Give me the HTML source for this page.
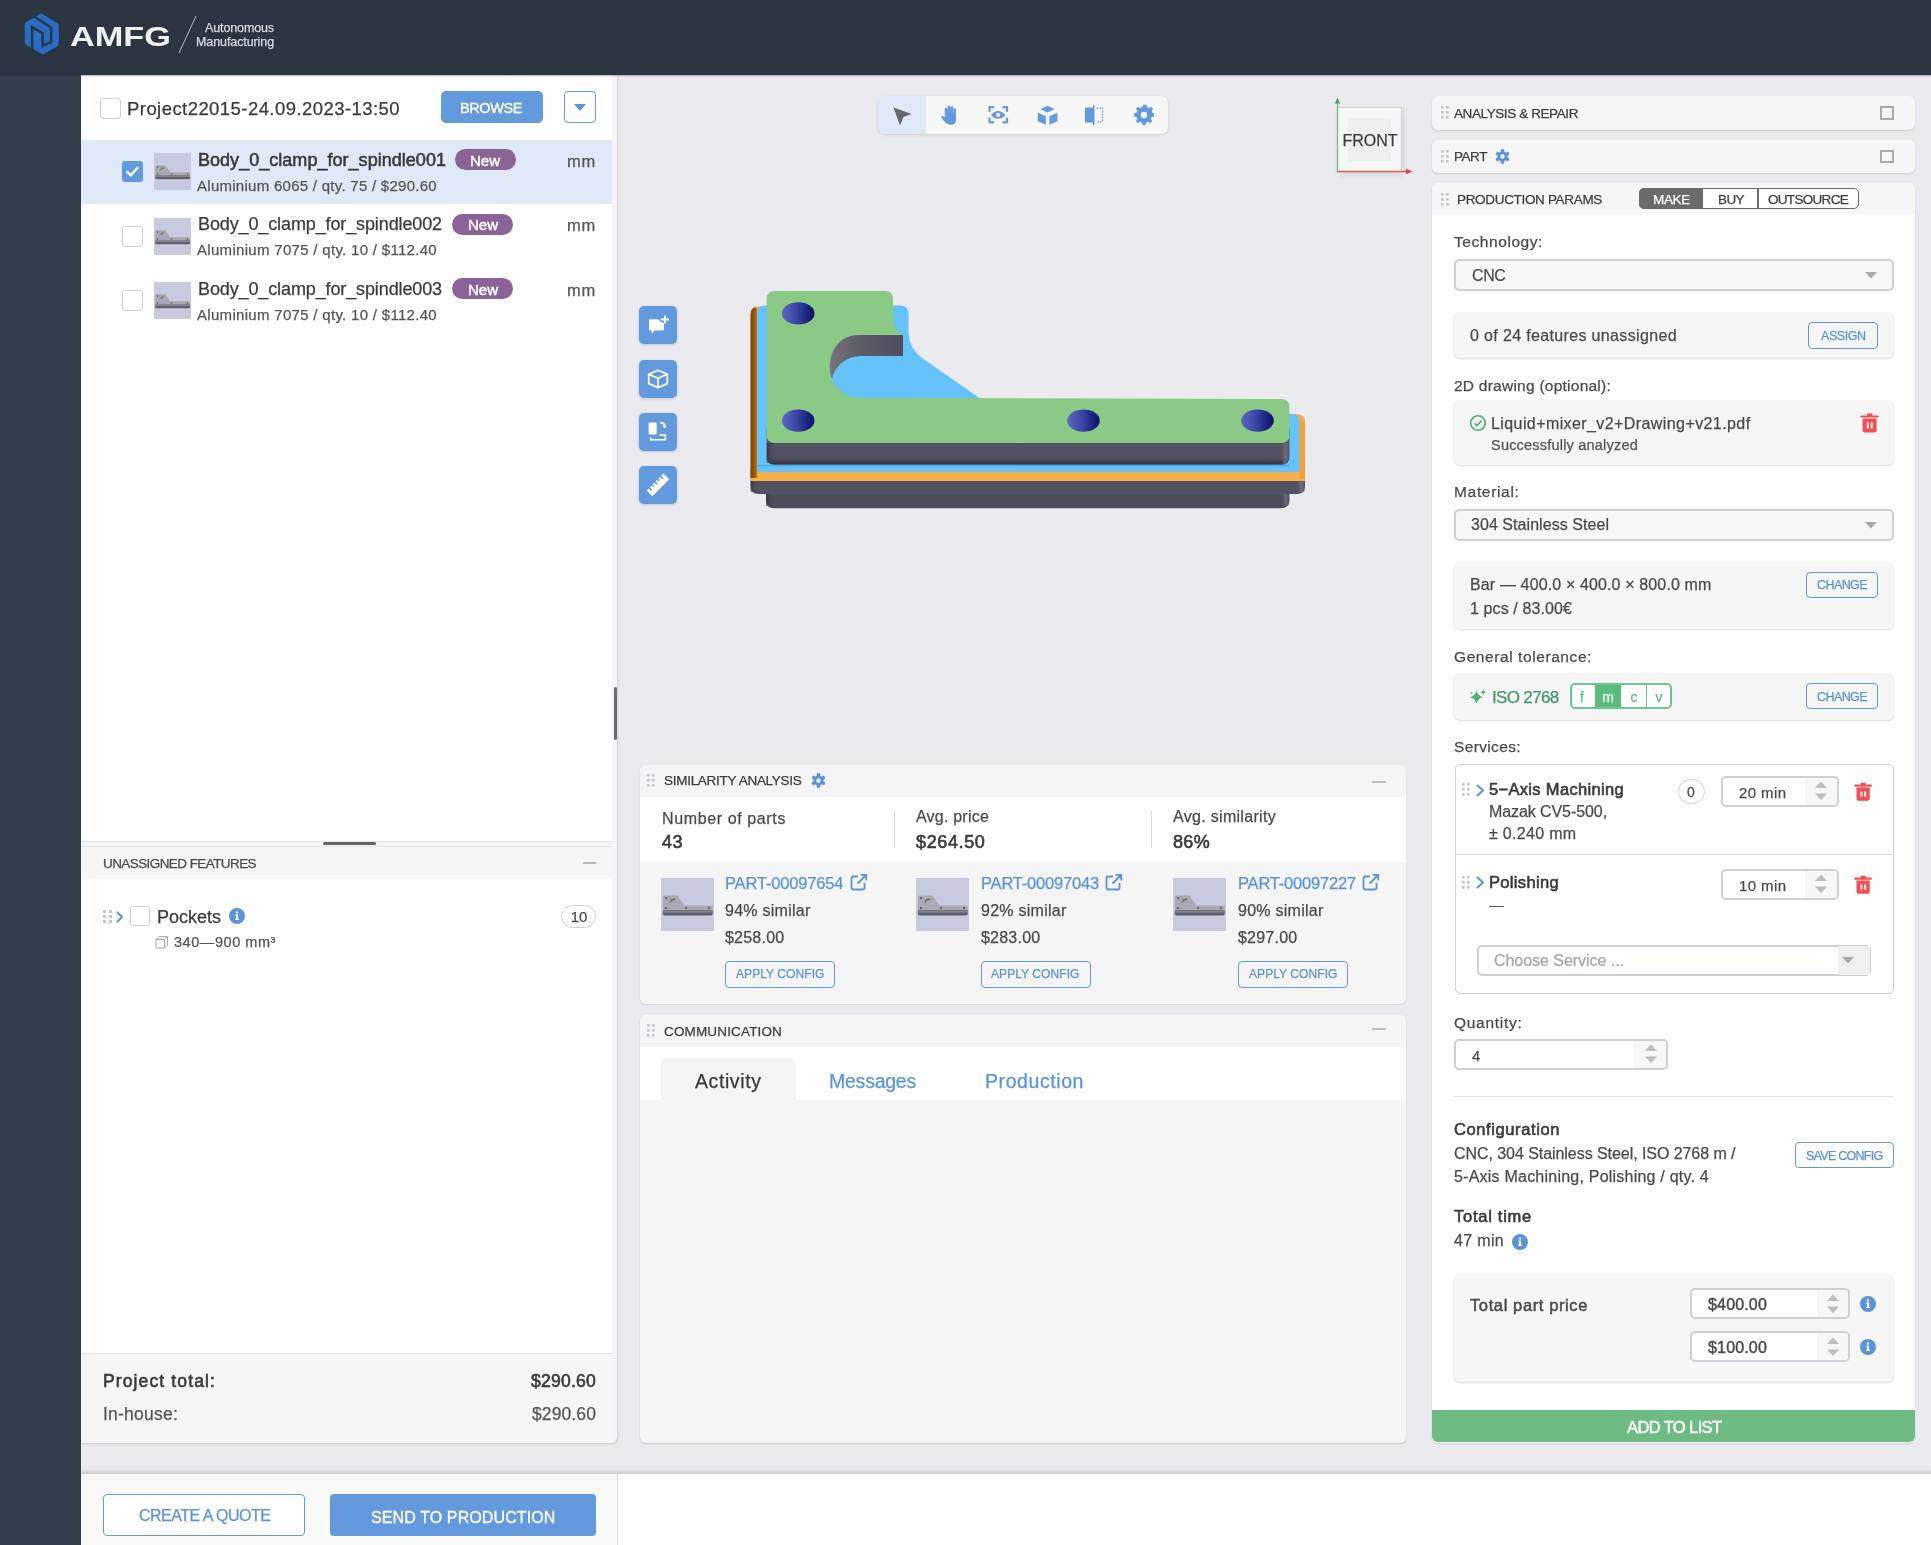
<!DOCTYPE html><html><head><meta charset="utf-8"><style>html,body{margin:0;padding:0;width:1931px;height:1545px;overflow:hidden;background:#fff;}body{position:relative;font-family:"Liberation Sans", sans-serif;}.t{position:absolute;white-space:nowrap;line-height:1;will-change:transform;-webkit-text-stroke:0.25px currentColor;}.t[style*="font-weight"]{-webkit-text-stroke:0;}</style></head><body>
<div style="position:absolute;left:0px;top:0px;width:1931px;height:75px;background:#2b3441;"></div>
<div style="position:absolute;left:0px;top:75px;width:1931px;height:2px;background:linear-gradient(to bottom, rgba(20,25,32,0.35), rgba(20,25,32,0));z-index:5;"></div>
<div style="position:absolute;left:0px;top:75px;width:81px;height:1470px;background:#343f4d;"></div>
<div style="position:absolute;left:81px;top:75px;width:1850px;height:1398px;background:#ebeaef;"></div>
<div style="position:absolute;left:81px;top:1469px;width:1850px;height:5px;background:linear-gradient(to bottom, rgba(200,200,206,0) 0%, rgba(200,200,206,0.6) 60%, #cfcfd4 100%);"></div>
<div style="position:absolute;left:81px;top:1474px;width:1850px;height:71px;background:#ffffff;"></div>
<div style="position:absolute;left:81px;top:1474px;width:537px;height:71px;background:#f9f9f8;border-right:1px solid #dcdcdc;box-sizing:border-box;"></div>
<svg style="position:absolute;left:20px;top:10px" width="44" height="50" viewBox="0 0 44 50">
<path d="M21 3.8 L38.2 14.4 L38.2 35.3 L23 44.1 L5.2 33.7 L5.2 13.3 Z" fill="#2a6cc4" stroke="#2a6cc4" stroke-width="1" stroke-linejoin="round"/>
<path d="M14 6.6 L31.1 17.6 L31.1 32.2 L22.6 35.8 L22.6 23.3 L12.1 17.2 L12.1 39" fill="none" stroke="#2b3441" stroke-width="2.4" stroke-linejoin="miter"/>
</svg>
<svg style="position:absolute;left:176px;top:14px" width="24" height="42"><line x1="3" y1="39" x2="20" y2="2" stroke="#b9bdc4" stroke-width="1"/></svg>
<div style="position:absolute;left:81px;top:75px;width:537px;height:1368px;background:#f5f5f5;border-right:1px solid #d8d8dc;box-sizing:border-box;border-bottom-right-radius:6px;box-shadow:0 1px 2px rgba(0,0,0,0.12);"></div>
<div style="position:absolute;left:81px;top:75px;width:531px;height:1278px;background:#ffffff;"></div>
<div style="position:absolute;left:614px;top:687px;width:3px;height:53px;background:#6b6b6b;border-radius:2px;"></div>
<div style="position:absolute;left:81px;top:1353px;width:531px;height:90px;background:#f6f6f6;border-top:1px solid #e4e4e4;box-sizing:border-box;"></div>
<div style="position:absolute;left:100px;top:98px;width:21px;height:21px;background:#fff;border:1.5px solid #cfd0d6;border-radius:3px;box-sizing:border-box;"></div>
<div style="position:absolute;left:441px;top:91px;width:102px;height:32px;background:#6399dd;border-radius:5px;"></div>
<div style="position:absolute;left:564px;top:91px;width:32px;height:32px;border:1.5px solid #6399dd;border-radius:4px;box-sizing:border-box;background:#fff;"></div>
<svg style="position:absolute;left:564px;top:91px" width="32" height="32"><path d="M10 13 L22 13 L16 20 Z" fill="#5b93da"/></svg>
<div style="position:absolute;left:81px;top:140px;width:531px;height:64px;background:#dfe9f7;"></div>
<div style="position:absolute;left:122px;top:161px;width:21px;height:21px;background:#6399dd;border-radius:3px;"></div>
<svg style="position:absolute;left:122px;top:161px" width="21" height="21" viewBox="0 0 21 21"><path d="M5.2 10.8 L8.8 14.3 L15.6 6.8" fill="none" stroke="#fff" stroke-width="2.4" stroke-linecap="round" stroke-linejoin="round"/></svg>
<svg style="position:absolute;left:154px;top:153px" width="37" height="37" viewBox="0 0 37 37"><rect width="37" height="37" fill="#c8cadf"/>
<path d="M1.3 13.5 Q1.3 12.2 2.6 12.2 L10.5 12.2 Q11.5 12.2 12 13 L16.3 19.2 L35 19.2 Q36.1 19.2 36.1 20.3 L36.1 23 L1.3 23 Z" fill="#a9a9b1"/>
<path d="M1.3 22.5 L36.1 22.5 L36.1 25 Q36.1 26.2 35 26.2 L2.4 26.2 Q1.3 26.2 1.3 25 Z" fill="#5f5e6e"/>
<rect x="1.3" y="23.3" width="34.8" height="0.7" fill="#9a9aa3"/>
<circle cx="3.5" cy="14" r="0.75" fill="#555"/><circle cx="3.5" cy="21" r="0.75" fill="#555"/><circle cx="17.5" cy="21" r="0.75" fill="#555"/><circle cx="33.5" cy="21" r="0.75" fill="#555"/>
<path d="M6.3 17.2 Q7 14.6 10 14.9" stroke="#66666e" stroke-width="1" fill="none"/></svg>
<div style="position:absolute;left:454.5px;top:149px;width:61px;height:21px;background:#8a6496;border-radius:11px;"></div>
<div style="position:absolute;left:122px;top:225.5px;width:21px;height:21px;background:#fff;border:1.5px solid #cfd0d6;border-radius:3px;box-sizing:border-box;"></div>
<svg style="position:absolute;left:154px;top:217.5px" width="37" height="37" viewBox="0 0 37 37"><rect width="37" height="37" fill="#c8cadf"/>
<path d="M1.3 13.5 Q1.3 12.2 2.6 12.2 L10.5 12.2 Q11.5 12.2 12 13 L16.3 19.2 L35 19.2 Q36.1 19.2 36.1 20.3 L36.1 23 L1.3 23 Z" fill="#a9a9b1"/>
<path d="M1.3 22.5 L36.1 22.5 L36.1 25 Q36.1 26.2 35 26.2 L2.4 26.2 Q1.3 26.2 1.3 25 Z" fill="#5f5e6e"/>
<rect x="1.3" y="23.3" width="34.8" height="0.7" fill="#9a9aa3"/>
<circle cx="3.5" cy="14" r="0.75" fill="#555"/><circle cx="3.5" cy="21" r="0.75" fill="#555"/><circle cx="17.5" cy="21" r="0.75" fill="#555"/><circle cx="33.5" cy="21" r="0.75" fill="#555"/>
<path d="M6.3 17.2 Q7 14.6 10 14.9" stroke="#66666e" stroke-width="1" fill="none"/></svg>
<div style="position:absolute;left:452px;top:213.5px;width:61px;height:21px;background:#8a6496;border-radius:11px;"></div>
<div style="position:absolute;left:122px;top:290px;width:21px;height:21px;background:#fff;border:1.5px solid #cfd0d6;border-radius:3px;box-sizing:border-box;"></div>
<svg style="position:absolute;left:154px;top:282px" width="37" height="37" viewBox="0 0 37 37"><rect width="37" height="37" fill="#c8cadf"/>
<path d="M1.3 13.5 Q1.3 12.2 2.6 12.2 L10.5 12.2 Q11.5 12.2 12 13 L16.3 19.2 L35 19.2 Q36.1 19.2 36.1 20.3 L36.1 23 L1.3 23 Z" fill="#a9a9b1"/>
<path d="M1.3 22.5 L36.1 22.5 L36.1 25 Q36.1 26.2 35 26.2 L2.4 26.2 Q1.3 26.2 1.3 25 Z" fill="#5f5e6e"/>
<rect x="1.3" y="23.3" width="34.8" height="0.7" fill="#9a9aa3"/>
<circle cx="3.5" cy="14" r="0.75" fill="#555"/><circle cx="3.5" cy="21" r="0.75" fill="#555"/><circle cx="17.5" cy="21" r="0.75" fill="#555"/><circle cx="33.5" cy="21" r="0.75" fill="#555"/>
<path d="M6.3 17.2 Q7 14.6 10 14.9" stroke="#66666e" stroke-width="1" fill="none"/></svg>
<div style="position:absolute;left:452px;top:278px;width:61px;height:21px;background:#8a6496;border-radius:11px;"></div>
<div style="position:absolute;left:81px;top:840.5px;width:531px;height:6px;background:#f4f5f6;border-top:1px solid #e3e5e8;border-bottom:1px solid #e0e2e5;box-sizing:border-box;"></div>
<div style="position:absolute;left:81px;top:846.5px;width:531px;height:32px;background:#f6f6f6;"></div>
<div style="position:absolute;left:323px;top:842.4px;width:53px;height:3px;background:#666;border-radius:1.5px;"></div>
<div style="position:absolute;left:583px;top:862px;width:13px;height:1.5px;background:#bbb;"></div>
<svg style="position:absolute;left:102.5px;top:910px" width="10.0" height="14.0"><rect x="0.0" y="0.0" width="3.0" height="3.0" fill="#c5c8d2"/><rect x="0.0" y="5.0" width="3.0" height="3.0" fill="#c5c8d2"/><rect x="0.0" y="10.0" width="3.0" height="3.0" fill="#c5c8d2"/><rect x="6.0" y="0.0" width="3.0" height="3.0" fill="#c5c8d2"/><rect x="6.0" y="5.0" width="3.0" height="3.0" fill="#c5c8d2"/><rect x="6.0" y="10.0" width="3.0" height="3.0" fill="#c5c8d2"/></svg>
<svg style="position:absolute;left:116px;top:911px" width="8" height="12"><path d="M1.5 1.5 L6 6.0 L1.5 10.5" fill="none" stroke="#5b93da" stroke-width="2" stroke-linecap="round" stroke-linejoin="round"/></svg>
<div style="position:absolute;left:130px;top:906px;width:20px;height:20px;background:#fff;border:1.5px solid #cfd0d6;border-radius:3px;box-sizing:border-box;"></div>
<svg style="position:absolute;left:229px;top:908px" width="16" height="16" viewBox="0 0 16 16"><circle cx="8" cy="8" r="8" fill="#5b93da"/><rect x="7" y="6.8" width="2.1" height="5" fill="#fff"/><circle cx="8" cy="4.4" r="1.2" fill="#fff"/><rect x="6.2" y="6.6" width="2.5" height="1.2" fill="#fff"/><rect x="6.2" y="10.9" width="3.8" height="1.1" fill="#fff"/></svg>
<div style="position:absolute;left:561px;top:905px;width:35px;height:23px;border:1px solid #d2d2d6;border-radius:12px;box-sizing:border-box;background:#fff;"></div>
<svg style="position:absolute;left:155px;top:935px" width="14" height="14" viewBox="0 0 14 14"><path d="M1 4.5 L4 1.5 L12.5 1.5 L12.5 10 L9.5 13 L1 13 Z M1 4.5 L9.5 4.5 L12.5 1.5 M9.5 4.5 L9.5 13" fill="none" stroke="#aaa" stroke-width="1"/></svg>
<div style="position:absolute;left:103px;top:1494px;width:202px;height:42px;border:1.5px solid #6399dd;border-radius:4px;box-sizing:border-box;background:#fff;"></div>
<div style="position:absolute;left:330px;top:1494px;width:266px;height:42px;background:#6399dd;border-radius:4px;"></div>
<div style="position:absolute;left:878px;top:96px;width:290px;height:38px;background:#f7f7f8;border-radius:7px;box-shadow:0 1px 3px rgba(0,0,0,0.12);"></div>
<div style="position:absolute;left:878px;top:96px;width:48px;height:38px;background:#dfe9f7;border-radius:7px 0 0 7px;"></div>
<svg style="position:absolute;left:878px;top:96px" width="290" height="38" viewBox="0 0 290 38">
<path d="M15.5 11.5 L33.5 18 L25.5 21 L22 29.5 Z" fill="#666"/>
<g fill="#6399dd" transform="translate(62.5 9.5) scale(1.0)">
<path d="M5.2 17.5 Q2.6 14.6 0.9 12.3 Q0.2 11 1.5 10.5 Q2.6 10.2 4.1 11.8 L4.3 12 L4.3 3.6 Q4.3 2.3 5.6 2.3 Q6.9 2.3 6.9 3.6 L6.9 9 L7.2 1.4 Q7.2 0.1 8.5 0.1 Q9.8 0.1 9.8 1.4 L9.8 9 L10.1 2 Q10.1 0.7 11.4 0.7 Q12.7 0.7 12.7 2 L12.7 9.2 L13.1 4 Q13.1 2.7 14.3 2.7 Q15.5 2.7 15.5 4 L15.5 14.5 Q15.4 19.3 10.5 19.3 Q7.4 19.3 5.2 17.5 Z"/>
</g>
<path d="M111.5 15 L111.5 11.2 L115.3 11.2 M125.3 11.2 L129 11.2 L129 15 M129 22.5 L129 26.3 L125.3 26.3 M115.3 26.3 L111.5 26.3 L111.5 22.5" fill="none" stroke="#6399dd" stroke-width="2.2" stroke-linecap="round" stroke-linejoin="round"/>
<path d="M113 18.9 Q120.2 11.2 127.4 18.9 Q120.2 26.6 113 18.9 Z" fill="#6399dd"/>
<circle cx="120.2" cy="18.9" r="2.1" fill="#f7f7f8"/>
<path d="M169.5 9.8 L176.6 13.2 L169.5 16.6 L162.4 13.2 Z" fill="#6399dd"/>
<path d="M159.8 16.8 L167.8 20.3 L167.8 28.8 L159.8 25.2 Z" fill="#6399dd"/>
<path d="M179.4 16.8 L171.4 20.3 L171.4 28.8 L179.4 25.2 Z" fill="#6399dd"/>
<rect x="207" y="11.5" width="8" height="15" fill="#6399dd"/>
<rect x="215" y="9" width="1.5" height="20" fill="#6399dd"/>
<path d="M218.5 12.2 L224.5 12.2 L224.5 25.8 L218.5 25.8" fill="none" stroke="#6399dd" stroke-width="1.3" stroke-dasharray="1.6 1.3"/>
<g transform="translate(266 19)">
<path d="M-1.6 -9.2 L1.6 -9.2 L2.1 -6.6 L4.2 -5.7 L6.4 -7.2 L8.6 -5 L7.1 -2.8 L8 -0.7 L9.6 -0.2 L9.6 3.0 L7.1 3.6 L6.2 5.7 L7.6 7.9 L5.4 10.1 L3.2 8.6 L1.1 9.5 L0.6 12 L-2.6 12 L-3.1 9.5 L-5.2 8.6 L-7.4 10.1 L-9.6 7.9 L-8.1 5.7 L-9 3.6 L-11.5 3 L-11.5 -0.2 L-9 -0.8 L-8.1 -2.9 L-9.6 -5.1 L-7.4 -7.3 L-5.2 -5.8 L-3.1 -6.7 Z" fill="#6399dd" transform="translate(1 -1.4) scale(0.95)"/>
<circle cx="0" cy="0" r="3.2" fill="#f7f7f8"/>
</g>
</svg>
<div style="position:absolute;left:639px;top:306px;width:38px;height:38px;background:#6399dd;border-radius:5px;box-shadow:0 1px 3px rgba(0,0,0,0.15);"></div>
<div style="position:absolute;left:639px;top:360px;width:38px;height:38px;background:#6399dd;border-radius:5px;box-shadow:0 1px 3px rgba(0,0,0,0.15);"></div>
<div style="position:absolute;left:639px;top:413px;width:38px;height:38px;background:#6399dd;border-radius:5px;box-shadow:0 1px 3px rgba(0,0,0,0.15);"></div>
<div style="position:absolute;left:639px;top:466px;width:38px;height:38px;background:#6399dd;border-radius:5px;box-shadow:0 1px 3px rgba(0,0,0,0.15);"></div>
<svg style="position:absolute;left:639px;top:306px" width="38" height="38" viewBox="0 0 38 38">
<path d="M10 14.5 Q10 13.3 11.2 13.3 L19 13.3 Q20.5 13.5 21 15.5 L25 17 L25 23 Q25 24.5 23.5 24.5 L15.5 24.5 L13 28 L12.5 24.5 L11.2 24.5 Q10 24.5 10 23.3 Z" fill="#fff"/>
<path d="M26 9.5 L26 17.5 M22 13.5 L30 13.5" stroke="#fff" stroke-width="1.9"/>
</svg>
<svg style="position:absolute;left:639px;top:360px" width="38" height="38" viewBox="0 0 38 38">
<path d="M19 10.2 L28.3 14.2 L28.3 23.6 L19 27.6 L9.7 23.6 L9.7 14.2 Z M9.7 14.2 L19 18.2 L28.3 14.2 M19 18.2 L19 27.6" fill="none" stroke="#fff" stroke-width="1.7" stroke-linejoin="round"/>
</svg>
<svg style="position:absolute;left:639px;top:413px" width="38" height="38" viewBox="0 0 38 38">
<rect x="9.6" y="9.5" width="8.2" height="12" rx="1.2" fill="#fff"/>
<path d="M11.7 24.5 L11.7 26.8 L26.4 26.8 L26.4 22 L20.5 22" fill="none" stroke="#fff" stroke-width="1.6"/>
<path d="M21 9.6 Q25.5 9.6 25.6 13.3" fill="none" stroke="#fff" stroke-width="1.6"/>
<path d="M23.5 12.8 L27.8 12.8 L25.6 15.5 Z" fill="#fff"/>
</svg>
<svg style="position:absolute;left:639px;top:466px" width="38" height="38" viewBox="0 0 38 38">
<g transform="rotate(-45 19 19)">
<rect x="7" y="14.8" width="24" height="8.2" fill="#fff"/>
<rect x="10" y="14.5" width="1.7" height="3.6" fill="#6399dd"/><rect x="14" y="14.5" width="1.7" height="2.4" fill="#6399dd"/><rect x="18" y="14.5" width="1.7" height="3.6" fill="#6399dd"/><rect x="22" y="14.5" width="1.7" height="2.4" fill="#6399dd"/><rect x="26" y="14.5" width="1.7" height="3.6" fill="#6399dd"/>
</g>
</svg>
<div style="position:absolute;left:1338px;top:107px;width:64px;height:64px;background:#f6f6f7;box-shadow:1px 3px 6px rgba(0,0,0,0.12);border-top:1px solid #d4d4d8;border-right:1px solid #d4d4d8;box-sizing:border-box;"></div>
<div style="position:absolute;left:1348px;top:118px;width:43px;height:43px;background:#efeff0;"></div>
<svg style="position:absolute;left:1330px;top:92px" width="90" height="86">
<line x1="7.5" y1="9" x2="7.5" y2="79.5" stroke="#73bb8c" stroke-width="1.3"/>
<path d="M4.8 11.5 L7.5 5.5 L10.2 11.5 Z" fill="#4ea56e"/>
<line x1="7" y1="79.5" x2="78" y2="79.5" stroke="#d46060" stroke-width="1.3"/>
<path d="M76 76.7 L82.5 79.5 L76 82.3 Z" fill="#d64848"/>
</svg>
<svg style="position:absolute;left:740px;top:280px" width="580" height="240" viewBox="740 280 580 240">
<defs>
<linearGradient id="hg" x1="0" x2="1" y1="0" y2="0"><stop offset="0" stop-color="#5e68c0"/><stop offset="0.45" stop-color="#3a46a6"/><stop offset="1" stop-color="#050f63"/></linearGradient>
<linearGradient id="sideL" x1="0" x2="1"><stop offset="0" stop-color="#2c2b38"/><stop offset="0.15" stop-color="#535263"/><stop offset="1" stop-color="#535263"/></linearGradient>
<linearGradient id="sideD" x1="0" x2="0" y1="0" y2="1"><stop offset="0" stop-color="#565567"/><stop offset="0.8" stop-color="#525162"/><stop offset="1" stop-color="#343340"/></linearGradient>
<linearGradient id="endHi" x1="0" x2="1"><stop offset="0" stop-color="#535263" stop-opacity="0"/><stop offset="0.6" stop-color="#8a8a92" stop-opacity="0.55"/><stop offset="1" stop-color="#55545f" stop-opacity="0.2"/></linearGradient>
<linearGradient id="endLo" x1="0" x2="1"><stop offset="0" stop-color="#1f1e2a" stop-opacity="0.55"/><stop offset="1" stop-color="#535263" stop-opacity="0"/></linearGradient>
<linearGradient id="oside" x1="0" x2="1"><stop offset="0" stop-color="#7a4300"/><stop offset="0.6" stop-color="#9a5a08"/><stop offset="1" stop-color="#c07a20"/></linearGradient>
<linearGradient id="wall" x1="0" x2="1"><stop offset="0" stop-color="#77767e"/><stop offset="0.4" stop-color="#5d5c68"/><stop offset="1" stop-color="#4f4e5e"/></linearGradient>
</defs>
<path d="M766 478 L1289.4 478 L1289.4 500 Q1289.4 508.3 1281 508.3 L774 508.3 Q766 508.3 766 500 Z" fill="#4d4c5d"/>
<path d="M750.6 468 L1305 468 L1305 486 Q1305 494 1297 494 L758 494 Q750.6 494 750.6 486 Z" fill="#535263"/>
<path d="M758 306.4 L902 306.4 Q906 306.4 906 314 L906 333 Q906 348 919 358 L981 400.5 L1283 400.5 L1283 414 L1296 414 Q1305 414 1305 422 L1305 481 L750.6 481 L750.6 314 Q750.6 306.4 758 306.4 Z" fill="#f5ae4b"/>
<path d="M757.2 310 L757.2 478 L750.6 478 L750.6 314 Q750.6 308 756 306.8 Z" fill="url(#oside)"/>
<path d="M765 305.6 L900 305.6 Q908.5 305.6 908.5 314 L908.5 333 Q909 348 922 358 L983 400.5 L1283 400.5 L1283 414 L1292 414 Q1299.6 414 1299.6 422 L1299.6 472 L757 472 L757 313 Q757 305.6 765 305.6 Z" fill="#66c2fa"/>
<path d="M766.7 428 L1289.4 428 L1289.4 456.5 Q1289.4 464.8 1281 464.8 L775 464.8 Q766.7 464.8 766.7 456.5 Z" fill="url(#sideD)"/>
<path d="M775 290.9 L885 290.9 Q893 290.9 893 299 L893 318 Q893 330 903 335 L858 335 C841 335 829.8 349 829.8 367 C829.8 385 844 398 861 398 L1281 398.9 Q1289.4 398.9 1289.4 407 L1289.4 435 Q1289.4 443 1281 443 L775 443 Q766.7 443 766.7 435 L766.7 299 Q766.7 290.9 775 290.9 Z" fill="#8bc986"/>
<path d="M1280 443 L1289.4 443 L1289.4 456.5 Q1289.4 464.8 1281 464.8 L1280 464.8 Z" fill="url(#endHi)"/>
<rect x="766.7" y="443" width="9" height="20" fill="url(#endLo)"/>
<rect x="1296" y="481" width="9" height="11" fill="url(#endHi)"/>
<rect x="1281" y="494" width="8.4" height="12" fill="url(#endHi)"/>
<rect x="750.6" y="481" width="8" height="11" fill="url(#endLo)"/>
<rect x="766" y="494" width="8" height="12" fill="url(#endLo)"/>
<rect x="1299.6" y="421" width="5.4" height="58" fill="#f0a23a"/>
<rect x="757" y="464.8" width="532" height="1.5" fill="#3f9fe0" opacity="0.7"/>
<path d="M903 335 L858 335 C841 335 829.8 349 829.8 367 C829.8 372 830.5 376 832 379 C835 366 846 356 862 356 L903 356 Z" fill="url(#wall)"/>
<ellipse cx="798.2" cy="313.4" rx="16.3" ry="11.2" fill="url(#hg)"/>
<ellipse cx="798.2" cy="420.6" rx="16.3" ry="11.2" fill="url(#hg)"/>
<ellipse cx="1083.5" cy="420.6" rx="16.3" ry="11.2" fill="url(#hg)"/>
<ellipse cx="1257.5" cy="420.6" rx="16.3" ry="11.2" fill="url(#hg)"/>
</svg>
<div style="position:absolute;left:640px;top:765px;width:766px;height:239px;background:#f5f5f6;border-radius:6px;box-shadow:0 1px 2px rgba(0,0,0,0.08);"></div>
<div style="position:absolute;left:640px;top:797px;width:766px;height:64.5px;background:#ffffff;"></div>
<svg style="position:absolute;left:647px;top:774px" width="8.6" height="13.6"><rect x="0.0" y="0.0" width="2.6" height="2.6" fill="#c3c6d0"/><rect x="0.0" y="5.0" width="2.6" height="2.6" fill="#c3c6d0"/><rect x="0.0" y="10.0" width="2.6" height="2.6" fill="#c3c6d0"/><rect x="5.0" y="0.0" width="2.6" height="2.6" fill="#c3c6d0"/><rect x="5.0" y="5.0" width="2.6" height="2.6" fill="#c3c6d0"/><rect x="5.0" y="10.0" width="2.6" height="2.6" fill="#c3c6d0"/></svg>
<svg style="position:absolute;left:810.5px;top:773px" width="15" height="15" viewBox="-10 -10 20 20"><g fill="#5b93da"><circle r="6.6"/><rect x="-2.3" y="-9.6" width="4.6" height="5" rx="0.6" transform="rotate(0)"/><rect x="-2.3" y="-9.6" width="4.6" height="5" rx="0.6" transform="rotate(60)"/><rect x="-2.3" y="-9.6" width="4.6" height="5" rx="0.6" transform="rotate(120)"/><rect x="-2.3" y="-9.6" width="4.6" height="5" rx="0.6" transform="rotate(180)"/><rect x="-2.3" y="-9.6" width="4.6" height="5" rx="0.6" transform="rotate(240)"/><rect x="-2.3" y="-9.6" width="4.6" height="5" rx="0.6" transform="rotate(300)"/></g><circle r="2.9" fill="#f5f5f6"/></svg>
<div style="position:absolute;left:1371.5px;top:781px;width:14px;height:1.5px;background:#bdbdc2;"></div>
<div style="position:absolute;left:894px;top:811px;width:1px;height:37px;background:#dcdcdf;"></div>
<div style="position:absolute;left:1151px;top:811px;width:1px;height:37px;background:#dcdcdf;"></div>
<svg style="position:absolute;left:661px;top:878px" width="53" height="53" viewBox="0 0 37 37"><rect width="37" height="37" fill="#c8cadf"/>
<path d="M1.3 13.5 Q1.3 12.2 2.6 12.2 L10.5 12.2 Q11.5 12.2 12 13 L16.3 19.2 L35 19.2 Q36.1 19.2 36.1 20.3 L36.1 23 L1.3 23 Z" fill="#a9a9b1"/>
<path d="M1.3 22.5 L36.1 22.5 L36.1 25 Q36.1 26.2 35 26.2 L2.4 26.2 Q1.3 26.2 1.3 25 Z" fill="#5f5e6e"/>
<rect x="1.3" y="23.3" width="34.8" height="0.7" fill="#9a9aa3"/>
<circle cx="3.5" cy="14" r="0.75" fill="#555"/><circle cx="3.5" cy="21" r="0.75" fill="#555"/><circle cx="17.5" cy="21" r="0.75" fill="#555"/><circle cx="33.5" cy="21" r="0.75" fill="#555"/>
<path d="M6.3 17.2 Q7 14.6 10 14.9" stroke="#66666e" stroke-width="1" fill="none"/></svg>
<svg style="position:absolute;left:849.5999999999999px;top:873px" width="18" height="18" viewBox="0 0 18 18"><path d="M8 3.5 L3 3.5 Q1.5 3.5 1.5 5 L1.5 15 Q1.5 16.5 3 16.5 L13 16.5 Q14.5 16.5 14.5 15 L14.5 10" fill="none" stroke="#5b93da" stroke-width="1.8"/><path d="M7.5 10.5 L15.5 2.5 M10.5 1.8 L16.2 1.8 L16.2 7.5" fill="none" stroke="#5b93da" stroke-width="1.8"/></svg>
<div style="position:absolute;left:725.3px;top:960.5px;width:110px;height:27px;border:1.5px solid #6399dd;border-radius:4px;box-sizing:border-box;"></div>
<svg style="position:absolute;left:915.6px;top:878px" width="53" height="53" viewBox="0 0 37 37"><rect width="37" height="37" fill="#c8cadf"/>
<path d="M1.3 13.5 Q1.3 12.2 2.6 12.2 L10.5 12.2 Q11.5 12.2 12 13 L16.3 19.2 L35 19.2 Q36.1 19.2 36.1 20.3 L36.1 23 L1.3 23 Z" fill="#a9a9b1"/>
<path d="M1.3 22.5 L36.1 22.5 L36.1 25 Q36.1 26.2 35 26.2 L2.4 26.2 Q1.3 26.2 1.3 25 Z" fill="#5f5e6e"/>
<rect x="1.3" y="23.3" width="34.8" height="0.7" fill="#9a9aa3"/>
<circle cx="3.5" cy="14" r="0.75" fill="#555"/><circle cx="3.5" cy="21" r="0.75" fill="#555"/><circle cx="17.5" cy="21" r="0.75" fill="#555"/><circle cx="33.5" cy="21" r="0.75" fill="#555"/>
<path d="M6.3 17.2 Q7 14.6 10 14.9" stroke="#66666e" stroke-width="1" fill="none"/></svg>
<svg style="position:absolute;left:1104.7px;top:873px" width="18" height="18" viewBox="0 0 18 18"><path d="M8 3.5 L3 3.5 Q1.5 3.5 1.5 5 L1.5 15 Q1.5 16.5 3 16.5 L13 16.5 Q14.5 16.5 14.5 15 L14.5 10" fill="none" stroke="#5b93da" stroke-width="1.8"/><path d="M7.5 10.5 L15.5 2.5 M10.5 1.8 L16.2 1.8 L16.2 7.5" fill="none" stroke="#5b93da" stroke-width="1.8"/></svg>
<div style="position:absolute;left:980.7px;top:960.5px;width:110px;height:27px;border:1.5px solid #6399dd;border-radius:4px;box-sizing:border-box;"></div>
<svg style="position:absolute;left:1173.4px;top:878px" width="53" height="53" viewBox="0 0 37 37"><rect width="37" height="37" fill="#c8cadf"/>
<path d="M1.3 13.5 Q1.3 12.2 2.6 12.2 L10.5 12.2 Q11.5 12.2 12 13 L16.3 19.2 L35 19.2 Q36.1 19.2 36.1 20.3 L36.1 23 L1.3 23 Z" fill="#a9a9b1"/>
<path d="M1.3 22.5 L36.1 22.5 L36.1 25 Q36.1 26.2 35 26.2 L2.4 26.2 Q1.3 26.2 1.3 25 Z" fill="#5f5e6e"/>
<rect x="1.3" y="23.3" width="34.8" height="0.7" fill="#9a9aa3"/>
<circle cx="3.5" cy="14" r="0.75" fill="#555"/><circle cx="3.5" cy="21" r="0.75" fill="#555"/><circle cx="17.5" cy="21" r="0.75" fill="#555"/><circle cx="33.5" cy="21" r="0.75" fill="#555"/>
<path d="M6.3 17.2 Q7 14.6 10 14.9" stroke="#66666e" stroke-width="1" fill="none"/></svg>
<svg style="position:absolute;left:1362.4px;top:873px" width="18" height="18" viewBox="0 0 18 18"><path d="M8 3.5 L3 3.5 Q1.5 3.5 1.5 5 L1.5 15 Q1.5 16.5 3 16.5 L13 16.5 Q14.5 16.5 14.5 15 L14.5 10" fill="none" stroke="#5b93da" stroke-width="1.8"/><path d="M7.5 10.5 L15.5 2.5 M10.5 1.8 L16.2 1.8 L16.2 7.5" fill="none" stroke="#5b93da" stroke-width="1.8"/></svg>
<div style="position:absolute;left:1238.4px;top:960.5px;width:110px;height:27px;border:1.5px solid #6399dd;border-radius:4px;box-sizing:border-box;"></div>
<div style="position:absolute;left:640px;top:1015px;width:766px;height:428px;background:#f5f5f6;border-radius:6px;box-shadow:0 1px 2px rgba(0,0,0,0.14);"></div>
<div style="position:absolute;left:640px;top:1046.5px;width:766px;height:53.5px;background:#ffffff;"></div>
<div style="position:absolute;left:640px;top:1015px;width:766px;height:31.5px;background:#f5f5f6;border-radius:6px 6px 0 0;"></div>
<svg style="position:absolute;left:647px;top:1024px" width="8.6" height="13.6"><rect x="0.0" y="0.0" width="2.6" height="2.6" fill="#c3c6d0"/><rect x="0.0" y="5.0" width="2.6" height="2.6" fill="#c3c6d0"/><rect x="0.0" y="10.0" width="2.6" height="2.6" fill="#c3c6d0"/><rect x="5.0" y="0.0" width="2.6" height="2.6" fill="#c3c6d0"/><rect x="5.0" y="5.0" width="2.6" height="2.6" fill="#c3c6d0"/><rect x="5.0" y="10.0" width="2.6" height="2.6" fill="#c3c6d0"/></svg>
<div style="position:absolute;left:1371.5px;top:1028px;width:14px;height:1.5px;background:#bdbdc2;"></div>
<div style="position:absolute;left:660.7px;top:1058px;width:135px;height:42px;background:#f5f5f6;border-radius:6px 6px 0 0;"></div>
<div style="position:absolute;left:1432px;top:96px;width:483px;height:33.5px;background:#f6f6f7;border-radius:6px;box-shadow:0 1px 2px rgba(0,0,0,0.12);"></div>
<svg style="position:absolute;left:1440.5px;top:106px" width="8.6" height="13.6"><rect x="0.0" y="0.0" width="2.6" height="2.6" fill="#c3c6d0"/><rect x="0.0" y="5.0" width="2.6" height="2.6" fill="#c3c6d0"/><rect x="0.0" y="10.0" width="2.6" height="2.6" fill="#c3c6d0"/><rect x="5.0" y="0.0" width="2.6" height="2.6" fill="#c3c6d0"/><rect x="5.0" y="5.0" width="2.6" height="2.6" fill="#c3c6d0"/><rect x="5.0" y="10.0" width="2.6" height="2.6" fill="#c3c6d0"/></svg>
<div style="position:absolute;left:1880px;top:106px;width:13.5px;height:13.5px;border:2px solid #a9a9af;box-sizing:border-box;"></div>
<div style="position:absolute;left:1432px;top:140px;width:483px;height:32.5px;background:#f6f6f7;border-radius:6px;box-shadow:0 1px 2px rgba(0,0,0,0.12);"></div>
<svg style="position:absolute;left:1440.5px;top:149.5px" width="8.6" height="13.6"><rect x="0.0" y="0.0" width="2.6" height="2.6" fill="#c3c6d0"/><rect x="0.0" y="5.0" width="2.6" height="2.6" fill="#c3c6d0"/><rect x="0.0" y="10.0" width="2.6" height="2.6" fill="#c3c6d0"/><rect x="5.0" y="0.0" width="2.6" height="2.6" fill="#c3c6d0"/><rect x="5.0" y="5.0" width="2.6" height="2.6" fill="#c3c6d0"/><rect x="5.0" y="10.0" width="2.6" height="2.6" fill="#c3c6d0"/></svg>
<svg style="position:absolute;left:1494.5px;top:148.5px" width="15" height="15" viewBox="-10 -10 20 20"><g fill="#5b93da"><circle r="6.6"/><rect x="-2.3" y="-9.6" width="4.6" height="5" rx="0.6" transform="rotate(0)"/><rect x="-2.3" y="-9.6" width="4.6" height="5" rx="0.6" transform="rotate(60)"/><rect x="-2.3" y="-9.6" width="4.6" height="5" rx="0.6" transform="rotate(120)"/><rect x="-2.3" y="-9.6" width="4.6" height="5" rx="0.6" transform="rotate(180)"/><rect x="-2.3" y="-9.6" width="4.6" height="5" rx="0.6" transform="rotate(240)"/><rect x="-2.3" y="-9.6" width="4.6" height="5" rx="0.6" transform="rotate(300)"/></g><circle r="2.9" fill="#f6f6f7"/></svg>
<div style="position:absolute;left:1880px;top:149.5px;width:13.5px;height:13.5px;border:2px solid #a9a9af;box-sizing:border-box;"></div>
<div style="position:absolute;left:1432px;top:182.5px;width:483px;height:1260px;background:#ffffff;border-radius:6px;box-shadow:0 1px 2px rgba(0,0,0,0.12);overflow:hidden;"></div>
<div style="position:absolute;left:1432px;top:182.5px;width:483px;height:31px;background:#f6f6f7;border-radius:6px 6px 0 0;"></div>
<svg style="position:absolute;left:1440.5px;top:192.5px" width="8.6" height="13.6"><rect x="0.0" y="0.0" width="2.6" height="2.6" fill="#c3c6d0"/><rect x="0.0" y="5.0" width="2.6" height="2.6" fill="#c3c6d0"/><rect x="0.0" y="10.0" width="2.6" height="2.6" fill="#c3c6d0"/><rect x="5.0" y="0.0" width="2.6" height="2.6" fill="#c3c6d0"/><rect x="5.0" y="5.0" width="2.6" height="2.6" fill="#c3c6d0"/><rect x="5.0" y="10.0" width="2.6" height="2.6" fill="#c3c6d0"/></svg>
<div style="position:absolute;left:1639px;top:188px;width:219.5px;height:21px;border:1.5px solid #6b6b6b;border-radius:5px;box-sizing:border-box;background:#fff;"></div>
<div style="position:absolute;left:1639px;top:188px;width:64px;height:21px;background:#6b6b6b;border-radius:5px 0 0 5px;"></div>
<div style="position:absolute;left:1757px;top:188px;width:1.5px;height:21px;background:#6b6b6b;"></div>
<div style="position:absolute;left:1454px;top:259px;width:440px;height:31.5px;background:#f8f8f8;border:2px solid #cdd0d6;border-radius:5px;box-sizing:border-box;"></div>
<svg style="position:absolute;left:1863px;top:269.75px" width="16" height="10"><path d="M2 2 L14 2 L8 8.5 Z" fill="#a9a9ae"/></svg>
<div style="position:absolute;left:1453.5px;top:311.5px;width:440px;height:46.5px;background:#f6f6f7;border-radius:6px;box-shadow:0 1px 2px rgba(0,0,0,0.14);"></div>
<div style="position:absolute;left:1808px;top:322px;width:69.5px;height:26.5px;border:1.5px solid #6399dd;border-radius:4px;box-sizing:border-box;"></div>
<div style="position:absolute;left:1453.5px;top:400px;width:440px;height:65px;background:#f6f6f7;border-radius:6px;box-shadow:0 1px 2px rgba(0,0,0,0.14);"></div>
<svg style="position:absolute;left:1469px;top:414px" width="18" height="18" viewBox="0 0 18 18"><circle cx="9" cy="9" r="7.3" fill="none" stroke="#4caf6e" stroke-width="1.6"/><path d="M5.6 9.3 L8 11.6 L12.5 6.6" fill="none" stroke="#4caf6e" stroke-width="1.6"/></svg>
<svg style="position:absolute;left:1859.5px;top:412.5px" width="19" height="20" viewBox="0 0 19 20"><rect x="6.9" y="0.5" width="5.6" height="2.6" rx="1" fill="#ef5053"/><rect x="0.3" y="2.4" width="18.5" height="2.2" rx="1" fill="#ef5053"/><path d="M2.6 5.5 L16.6 5.5 L16.6 17.5 Q16.6 19.5 14.6 19.5 L4.6 19.5 Q2.6 19.5 2.6 17.5 Z" fill="#ef5053"/><rect x="6.7" y="9.2" width="2.3" height="6.2" rx="1" fill="#f6dcdd"/><rect x="10.6" y="9.2" width="2.3" height="6.2" rx="1" fill="#f6dcdd"/></svg>
<div style="position:absolute;left:1454px;top:508.5px;width:440px;height:32px;background:#f8f8f8;border:2px solid #cdd0d6;border-radius:5px;box-sizing:border-box;"></div>
<svg style="position:absolute;left:1863px;top:519.5px" width="16" height="10"><path d="M2 2 L14 2 L8 8.5 Z" fill="#a9a9ae"/></svg>
<div style="position:absolute;left:1453.5px;top:561.5px;width:440px;height:67.5px;background:#f6f6f7;border-radius:6px;box-shadow:0 1px 2px rgba(0,0,0,0.14);"></div>
<div style="position:absolute;left:1805.5px;top:572px;width:72px;height:25.5px;border:1.5px solid #6399dd;border-radius:4px;box-sizing:border-box;"></div>
<div style="position:absolute;left:1453.5px;top:673px;width:440px;height:46.5px;background:#f6f6f7;border-radius:6px;box-shadow:0 1px 2px rgba(0,0,0,0.14);"></div>
<svg style="position:absolute;left:1469px;top:688px" width="18" height="18" viewBox="0 0 18 18"><path d="M7.5 2.5999999999999996 Q8.688 8.011999999999999 14.1 9.2 Q8.688 10.388 7.5 15.799999999999999 Q6.312 10.388 0.9000000000000004 9.2 Q6.312 8.011999999999999 7.5 2.5999999999999996 Z M14.2 1.5 Q14.686 3.7140000000000004 16.9 4.2 Q14.686 4.686 14.2 6.9 Q13.713999999999999 4.686 11.5 4.2 Q13.713999999999999 3.7140000000000004 14.2 1.5 Z M2.6 3.5000000000000004 Q2.8520000000000003 4.648000000000001 4.0 4.9 Q2.8520000000000003 5.152 2.6 6.300000000000001 Q2.348 5.152 1.2000000000000002 4.9 Q2.348 4.648000000000001 2.6 3.5000000000000004 Z" fill="#4fb374"/></svg>
<div style="position:absolute;left:1569.5px;top:683px;width:102px;height:26px;border:2px solid #6cc58a;border-radius:5px;box-sizing:border-box;background:#ffffff;"></div>
<div style="position:absolute;left:1595px;top:685px;width:26px;height:22px;background:#58bd7d;"></div>
<div style="position:absolute;left:1646px;top:684.5px;width:1.2px;height:23px;background:#72c48a;"></div>
<div style="position:absolute;left:1805.5px;top:683px;width:72px;height:26px;border:1.5px solid #6399dd;border-radius:4px;box-sizing:border-box;"></div>
<div style="position:absolute;left:1454.5px;top:764px;width:439px;height:230px;border:1.7px solid #cfd0d6;border-radius:5px;box-sizing:border-box;background:#fff;"></div>
<div style="position:absolute;left:1456px;top:854.2px;width:436px;height:1.3px;background:#d9dade;"></div>
<svg style="position:absolute;left:1462px;top:783px" width="8.6" height="13.6"><rect x="0.0" y="0.0" width="2.6" height="2.6" fill="#c3c6d0"/><rect x="0.0" y="5.0" width="2.6" height="2.6" fill="#c3c6d0"/><rect x="0.0" y="10.0" width="2.6" height="2.6" fill="#c3c6d0"/><rect x="5.0" y="0.0" width="2.6" height="2.6" fill="#c3c6d0"/><rect x="5.0" y="5.0" width="2.6" height="2.6" fill="#c3c6d0"/><rect x="5.0" y="10.0" width="2.6" height="2.6" fill="#c3c6d0"/></svg>
<svg style="position:absolute;left:1476px;top:783.5px" width="9" height="13"><path d="M1.5 1.5 L7 6.5 L1.5 11.5" fill="none" stroke="#5b93da" stroke-width="2" stroke-linecap="round" stroke-linejoin="round"/></svg>
<div style="position:absolute;left:1678px;top:779px;width:26.5px;height:25px;border:1px solid #cfd0d6;border-radius:13px;box-sizing:border-box;background:#fff;"></div>
<div style="position:absolute;left:1721px;top:775.6px;width:117.5px;height:31.5px;background:#fff;border:2px solid #cdd0d6;border-radius:5px;box-sizing:border-box;"></div>
<div style="position:absolute;left:1804.5px;top:777.6px;width:32px;height:27.5px;background:#f7f7f7;border-radius:0 3px 3px 0;"></div>
<svg style="position:absolute;left:1813.0px;top:781.35px" width="16" height="20"><path d="M2 7 L14 7 L8 0.5 Z M2 12.5 L14 12.5 L8 19 Z" fill="#bcbcc1"/></svg>
<svg style="position:absolute;left:1853.5px;top:781.5px" width="18" height="19.5" viewBox="0 0 19 20"><rect x="6.9" y="0.5" width="5.6" height="2.6" rx="1" fill="#ef5053"/><rect x="0.3" y="2.4" width="18.5" height="2.2" rx="1" fill="#ef5053"/><path d="M2.6 5.5 L16.6 5.5 L16.6 17.5 Q16.6 19.5 14.6 19.5 L4.6 19.5 Q2.6 19.5 2.6 17.5 Z" fill="#ef5053"/><rect x="6.7" y="9.2" width="2.3" height="6.2" rx="1" fill="#f6dcdd"/><rect x="10.6" y="9.2" width="2.3" height="6.2" rx="1" fill="#f6dcdd"/></svg>
<svg style="position:absolute;left:1462px;top:875.5px" width="8.6" height="13.6"><rect x="0.0" y="0.0" width="2.6" height="2.6" fill="#c3c6d0"/><rect x="0.0" y="5.0" width="2.6" height="2.6" fill="#c3c6d0"/><rect x="0.0" y="10.0" width="2.6" height="2.6" fill="#c3c6d0"/><rect x="5.0" y="0.0" width="2.6" height="2.6" fill="#c3c6d0"/><rect x="5.0" y="5.0" width="2.6" height="2.6" fill="#c3c6d0"/><rect x="5.0" y="10.0" width="2.6" height="2.6" fill="#c3c6d0"/></svg>
<svg style="position:absolute;left:1476px;top:876px" width="9" height="13"><path d="M1.5 1.5 L7 6.5 L1.5 11.5" fill="none" stroke="#5b93da" stroke-width="2" stroke-linecap="round" stroke-linejoin="round"/></svg>
<div style="position:absolute;left:1489.3px;top:905.5px;width:14.7px;height:1.5px;background:#555;"></div>
<div style="position:absolute;left:1721px;top:868.5px;width:117.5px;height:31.5px;background:#fff;border:2px solid #cdd0d6;border-radius:5px;box-sizing:border-box;"></div>
<div style="position:absolute;left:1804.5px;top:870.5px;width:32px;height:27.5px;background:#f7f7f7;border-radius:0 3px 3px 0;"></div>
<svg style="position:absolute;left:1813.0px;top:874.25px" width="16" height="20"><path d="M2 7 L14 7 L8 0.5 Z M2 12.5 L14 12.5 L8 19 Z" fill="#bcbcc1"/></svg>
<svg style="position:absolute;left:1853.8px;top:874.5px" width="18" height="19.5" viewBox="0 0 19 20"><rect x="6.9" y="0.5" width="5.6" height="2.6" rx="1" fill="#ef5053"/><rect x="0.3" y="2.4" width="18.5" height="2.2" rx="1" fill="#ef5053"/><path d="M2.6 5.5 L16.6 5.5 L16.6 17.5 Q16.6 19.5 14.6 19.5 L4.6 19.5 Q2.6 19.5 2.6 17.5 Z" fill="#ef5053"/><rect x="6.7" y="9.2" width="2.3" height="6.2" rx="1" fill="#f6dcdd"/><rect x="10.6" y="9.2" width="2.3" height="6.2" rx="1" fill="#f6dcdd"/></svg>
<div style="position:absolute;left:1477px;top:944.7px;width:394px;height:31.5px;background:#ffffff;border:2px solid #cdd0d6;border-radius:5px;box-sizing:border-box;"></div>
<div style="position:absolute;left:1838px;top:946.2px;width:31.5px;height:28.5px;background:#f0f0f2;"></div>
<svg style="position:absolute;left:1840px;top:955.45px" width="16" height="10"><path d="M2 2 L14 2 L8 8.5 Z" fill="#a9a9ae"/></svg>
<div style="position:absolute;left:1454.4px;top:1038.7px;width:214px;height:31.5px;background:#fff;border:2px solid #cdd0d6;border-radius:5px;box-sizing:border-box;"></div>
<div style="position:absolute;left:1634.4px;top:1040.7px;width:32px;height:27.5px;background:#f7f7f7;border-radius:0 3px 3px 0;"></div>
<svg style="position:absolute;left:1642.9px;top:1044.45px" width="16" height="20"><path d="M2 7 L14 7 L8 0.5 Z M2 12.5 L14 12.5 L8 19 Z" fill="#bcbcc1"/></svg>
<div style="position:absolute;left:1454px;top:1096px;width:440px;height:1.2px;background:#e2e2e5;"></div>
<div style="position:absolute;left:1795px;top:1142.4px;width:98.5px;height:25.5px;border:1.5px solid #6399dd;border-radius:4px;box-sizing:border-box;"></div>
<svg style="position:absolute;left:1511.5px;top:1233.5px" width="16" height="16" viewBox="0 0 16 16"><circle cx="8" cy="8" r="8" fill="#5b93da"/><rect x="7" y="6.8" width="2.1" height="5" fill="#fff"/><circle cx="8" cy="4.4" r="1.2" fill="#fff"/><rect x="6.2" y="6.6" width="2.5" height="1.2" fill="#fff"/><rect x="6.2" y="10.9" width="3.8" height="1.1" fill="#fff"/></svg>
<div style="position:absolute;left:1453.5px;top:1274.4px;width:440px;height:107.6px;background:#f6f6f7;border-radius:6px;box-shadow:0 1px 2px rgba(0,0,0,0.14);"></div>
<div style="position:absolute;left:1690.4px;top:1288.4px;width:159.6px;height:31px;background:#fff;border:2px solid #cdd0d6;border-radius:5px;box-sizing:border-box;"></div>
<div style="position:absolute;left:1817.0px;top:1290.4px;width:31px;height:27px;background:#f7f7f7;border-radius:0 3px 3px 0;"></div>
<svg style="position:absolute;left:1825.0px;top:1293.9px" width="16" height="20"><path d="M2 7 L14 7 L8 0.5 Z M2 12.5 L14 12.5 L8 19 Z" fill="#bcbcc1"/></svg>
<div style="position:absolute;left:1690.4px;top:1331.3px;width:159.6px;height:31px;background:#fff;border:2px solid #cdd0d6;border-radius:5px;box-sizing:border-box;"></div>
<div style="position:absolute;left:1817.0px;top:1333.3px;width:31px;height:27px;background:#f7f7f7;border-radius:0 3px 3px 0;"></div>
<svg style="position:absolute;left:1825.0px;top:1336.8px" width="16" height="20"><path d="M2 7 L14 7 L8 0.5 Z M2 12.5 L14 12.5 L8 19 Z" fill="#bcbcc1"/></svg>
<svg style="position:absolute;left:1860px;top:1296px" width="16" height="16" viewBox="0 0 16 16"><circle cx="8" cy="8" r="8" fill="#5b93da"/><rect x="7" y="6.8" width="2.1" height="5" fill="#fff"/><circle cx="8" cy="4.4" r="1.2" fill="#fff"/><rect x="6.2" y="6.6" width="2.5" height="1.2" fill="#fff"/><rect x="6.2" y="10.9" width="3.8" height="1.1" fill="#fff"/></svg>
<svg style="position:absolute;left:1860px;top:1339px" width="16" height="16" viewBox="0 0 16 16"><circle cx="8" cy="8" r="8" fill="#5b93da"/><rect x="7" y="6.8" width="2.1" height="5" fill="#fff"/><circle cx="8" cy="4.4" r="1.2" fill="#fff"/><rect x="6.2" y="6.6" width="2.5" height="1.2" fill="#fff"/><rect x="6.2" y="10.9" width="3.8" height="1.1" fill="#fff"/></svg>
<div style="position:absolute;left:1432px;top:1410px;width:483px;height:32px;background:#6fbb84;border-radius:0 0 6px 6px;"></div>
<div class="t" id="t0" style="top:22.27px;font-size:28.5px;color:#eef0f2;font-weight:700;transform:scaleX(1.2037);transform-origin:left center;left:70px;">AMFG</div>
<div class="t" id="t1" style="top:21.72px;font-size:12.5px;color:#d9dce1;letter-spacing:-0.119px;left:205px;">Autonomous</div>
<div class="t" id="t2" style="top:36.32px;font-size:12.5px;color:#d9dce1;letter-spacing:-0.094px;left:196px;">Manufacturing</div>
<div class="t" id="t3" style="top:99.54px;font-size:18.5px;color:#3a3a3a;letter-spacing:0.440px;left:127px;">Project22015-24.09.2023-13:50</div>
<div class="t" id="t4" style="top:100.73px;font-size:14.5px;color:#fff;letter-spacing:-0.409px;-webkit-text-stroke:0.35px currentColor;left:460px;">BROWSE</div>
<div class="t" id="t5" style="top:150.76px;font-size:18px;color:#3a3a3a;letter-spacing:0.030px;-webkit-text-stroke:0.55px currentColor;left:197.5px;">Body_0_clamp_for_spindle001</div>
<div class="t" id="t6" style="top:152.80px;font-size:15px;color:#fff;-webkit-text-stroke:0.45px currentColor;left:485.0px;transform:translateX(-50%);">New</div>
<div class="t" id="t7" style="top:152.53px;font-size:16.5px;color:#555;letter-spacing:0.750px;right:1335.25px;">mm</div>
<div class="t" id="t8" style="top:177.80px;font-size:15px;color:#555;letter-spacing:0.273px;left:197px;">Aluminium 6065 / qty. 75 / $290.60</div>
<div class="t" id="t9" style="top:215.26px;font-size:18px;color:#3a3a3a;letter-spacing:-0.118px;left:197.5px;">Body_0_clamp_for_spindle002</div>
<div class="t" id="t10" style="top:217.30px;font-size:15px;color:#fff;-webkit-text-stroke:0.45px currentColor;left:482.5px;transform:translateX(-50%);">New</div>
<div class="t" id="t11" style="top:217.03px;font-size:16.5px;color:#555;letter-spacing:0.750px;right:1335.25px;">mm</div>
<div class="t" id="t12" style="top:242.30px;font-size:15px;color:#555;letter-spacing:0.306px;left:197px;">Aluminium 7075 / qty. 10 / $112.40</div>
<div class="t" id="t13" style="top:279.76px;font-size:18px;color:#3a3a3a;letter-spacing:-0.118px;left:197.5px;">Body_0_clamp_for_spindle003</div>
<div class="t" id="t14" style="top:281.80px;font-size:15px;color:#fff;-webkit-text-stroke:0.45px currentColor;left:482.5px;transform:translateX(-50%);">New</div>
<div class="t" id="t15" style="top:281.53px;font-size:16.5px;color:#555;letter-spacing:0.750px;right:1335.25px;">mm</div>
<div class="t" id="t16" style="top:306.80px;font-size:15px;color:#555;letter-spacing:0.306px;left:197px;">Aluminium 7075 / qty. 10 / $112.40</div>
<div class="t" id="t17" style="top:856.57px;font-size:13.5px;color:#4a4a4a;letter-spacing:-0.581px;left:103px;">UNASSIGNED FEATURES</div>
<div class="t" id="t18" style="top:908.06px;font-size:18px;color:#3a3a3a;letter-spacing:-0.004px;left:157px;">Pockets</div>
<div class="t" id="t19" style="top:909.30px;font-size:15px;color:#4a4a4a;left:578.5px;transform:translateX(-50%);">10</div>
<div class="t" id="t20" style="top:935.23px;font-size:14.5px;color:#555;letter-spacing:0.554px;left:174px;">340—900 mm³</div>
<div class="t" id="t21" style="top:1372.99px;font-size:17.5px;color:#3a3a3a;-webkit-text-stroke:0.6px currentColor;letter-spacing:1.123px;left:103px;">Project total:</div>
<div class="t" id="t22" style="top:1372.99px;font-size:17.5px;color:#3a3a3a;-webkit-text-stroke:0.6px currentColor;letter-spacing:0.248px;right:1334.75px;">$290.60</div>
<div class="t" id="t23" style="top:1406.49px;font-size:17.5px;color:#555;letter-spacing:0.226px;left:103px;">In-house:</div>
<div class="t" id="t24" style="top:1406.49px;font-size:17.5px;color:#555;letter-spacing:0.105px;right:1334.90px;">$290.60</div>
<div class="t" id="t25" style="top:1508.26px;font-size:16px;color:#5b93da;letter-spacing:-0.493px;left:138.5px;">CREATE A QUOTE</div>
<div class="t" id="t26" style="top:1509.96px;font-size:16px;color:#fff;letter-spacing:0.109px;-webkit-text-stroke:0.35px currentColor;left:371px;">SEND TO PRODUCTION</div>
<div class="t" id="t27" style="top:133.46px;font-size:16px;color:#3d3d3d;left:1369.5px;transform:translateX(-50%);">FRONT</div>
<div class="t" id="t28" style="top:774.37px;font-size:13.5px;color:#3d3d3d;letter-spacing:-0.280px;left:663.5px;">SIMILARITY ANALYSIS</div>
<div class="t" id="t29" style="top:811.06px;font-size:16px;color:#4a4a4a;letter-spacing:0.619px;left:661.5px;">Number of parts</div>
<div class="t" id="t30" style="top:832.76px;font-size:18px;color:#3a3a3a;-webkit-text-stroke:0.6px currentColor;letter-spacing:0.484px;left:661.5px;">43</div>
<div class="t" id="t31" style="top:808.66px;font-size:16px;color:#4a4a4a;letter-spacing:0.214px;left:915.6px;">Avg. price</div>
<div class="t" id="t32" style="top:832.76px;font-size:18px;color:#3a3a3a;-webkit-text-stroke:0.6px currentColor;letter-spacing:0.632px;left:915.6px;">$264.50</div>
<div class="t" id="t33" style="top:808.66px;font-size:16px;color:#4a4a4a;letter-spacing:0.307px;left:1173.4px;">Avg. similarity</div>
<div class="t" id="t34" style="top:832.76px;font-size:18px;color:#3a3a3a;-webkit-text-stroke:0.6px currentColor;letter-spacing:0.323px;left:1173.4px;">86%</div>
<div class="t" id="t35" style="top:874.93px;font-size:16.5px;color:#5b93da;letter-spacing:-0.168px;left:725.3px;">PART-00097654</div>
<div class="t" id="t36" style="top:902.76px;font-size:16px;color:#4a4a4a;letter-spacing:0.256px;left:725.3px;">94% similar</div>
<div class="t" id="t37" style="top:930.46px;font-size:16px;color:#4a4a4a;letter-spacing:0.222px;left:725.3px;">$258.00</div>
<div class="t" id="t38" style="top:968.34px;font-size:12px;color:#5b93da;letter-spacing:0.076px;left:735.8px;">APPLY CONFIG</div>
<div class="t" id="t39" style="top:874.93px;font-size:16.5px;color:#5b93da;letter-spacing:-0.191px;left:980.7px;">PART-00097043</div>
<div class="t" id="t40" style="top:902.76px;font-size:16px;color:#4a4a4a;letter-spacing:0.256px;left:980.7px;">92% similar</div>
<div class="t" id="t41" style="top:930.46px;font-size:16px;color:#4a4a4a;letter-spacing:0.222px;left:980.7px;">$283.00</div>
<div class="t" id="t42" style="top:968.34px;font-size:12px;color:#5b93da;letter-spacing:0.076px;left:991.2px;">APPLY CONFIG</div>
<div class="t" id="t43" style="top:874.93px;font-size:16.5px;color:#5b93da;letter-spacing:-0.191px;left:1238.4px;">PART-00097227</div>
<div class="t" id="t44" style="top:902.76px;font-size:16px;color:#4a4a4a;letter-spacing:0.256px;left:1238.4px;">90% similar</div>
<div class="t" id="t45" style="top:930.46px;font-size:16px;color:#4a4a4a;letter-spacing:0.222px;left:1238.4px;">$297.00</div>
<div class="t" id="t46" style="top:968.34px;font-size:12px;color:#5b93da;letter-spacing:0.076px;left:1248.9px;">APPLY CONFIG</div>
<div class="t" id="t47" style="top:1024.77px;font-size:13.5px;color:#3d3d3d;letter-spacing:0.154px;left:663.5px;">COMMUNICATION</div>
<div class="t" id="t48" style="top:1072.09px;font-size:19.5px;color:#3a3a3a;letter-spacing:0.592px;left:694.6px;">Activity</div>
<div class="t" id="t49" style="top:1072.09px;font-size:19.5px;color:#5b93da;letter-spacing:-0.234px;left:829.3px;">Messages</div>
<div class="t" id="t50" style="top:1072.09px;font-size:19.5px;color:#5b93da;letter-spacing:0.577px;left:985.2px;">Production</div>
<div class="t" id="t51" style="top:107.07px;font-size:13.5px;color:#3d3d3d;letter-spacing:-0.400px;left:1454px;">ANALYSIS &amp; REPAIR</div>
<div class="t" id="t52" style="top:150.07px;font-size:13.5px;color:#3d3d3d;letter-spacing:-0.441px;left:1454px;">PART</div>
<div class="t" id="t53" style="top:192.57px;font-size:13.5px;color:#3d3d3d;letter-spacing:-0.324px;left:1457px;">PRODUCTION PARAMS</div>
<div class="t" id="t54" style="top:192.57px;font-size:13.5px;color:#ffffff;letter-spacing:-0.316px;left:1652.5px;">MAKE</div>
<div class="t" id="t55" style="top:192.57px;font-size:13.5px;color:#3d3d3d;letter-spacing:-0.589px;left:1717.5px;">BUY</div>
<div class="t" id="t56" style="top:192.57px;font-size:13.5px;color:#3d3d3d;letter-spacing:-0.696px;left:1768px;">OUTSOURCE</div>
<div class="t" id="t57" style="top:234.48px;font-size:15.5px;color:#4a4a4a;letter-spacing:0.570px;left:1454px;">Technology:</div>
<div class="t" id="t58" style="top:268.06px;font-size:16px;color:#4a4a4a;letter-spacing:-0.391px;left:1471.6px;">CNC</div>
<div class="t" id="t59" style="top:328.46px;font-size:16px;color:#4a4a4a;letter-spacing:0.352px;left:1469.7px;">0 of 24 features unassigned</div>
<div class="t" id="t60" style="top:329.72px;font-size:12.5px;color:#5b93da;letter-spacing:-0.458px;left:1820.5px;">ASSIGN</div>
<div class="t" id="t61" style="top:377.88px;font-size:15.5px;color:#4a4a4a;letter-spacing:0.244px;left:1454px;">2D drawing (optional):</div>
<div class="t" id="t62" style="top:415.76px;font-size:16px;color:#4a4a4a;letter-spacing:0.409px;left:1491.4px;">Liquid+mixer_v2+Drawing+v21.pdf</div>
<div class="t" id="t63" style="top:438.23px;font-size:14.5px;color:#555;letter-spacing:0.206px;left:1491.4px;">Successfully analyzed</div>
<div class="t" id="t64" style="top:484.18px;font-size:15.5px;color:#4a4a4a;letter-spacing:0.674px;left:1454px;">Material:</div>
<div class="t" id="t65" style="top:517.46px;font-size:16px;color:#4a4a4a;letter-spacing:0.053px;left:1471.2px;">304 Stainless Steel</div>
<div class="t" id="t66" style="top:577.16px;font-size:16px;color:#4a4a4a;letter-spacing:0.134px;left:1470.4px;">Bar — 400.0 × 400.0 × 800.0 mm</div>
<div class="t" id="t67" style="top:601.06px;font-size:16px;color:#4a4a4a;letter-spacing:0.106px;left:1470.4px;">1 pcs / 83.00€</div>
<div class="t" id="t68" style="top:579.42px;font-size:12.5px;color:#5b93da;letter-spacing:-0.581px;left:1816.5px;">CHANGE</div>
<div class="t" id="t69" style="top:649.28px;font-size:15.5px;color:#4a4a4a;letter-spacing:0.582px;left:1454px;">General tolerance:</div>
<div class="t" id="t70" style="top:689.11px;font-size:17px;color:#3f9a62;letter-spacing:-0.666px;left:1491.6px;">ISO 2768</div>
<div class="t" id="t71" style="top:689.65px;font-size:14px;color:#5dbb7a;left:1582.2px;transform:translateX(-50%);">f</div>
<div class="t" id="t72" style="top:689.65px;font-size:14px;color:#ffffff;left:1608px;transform:translateX(-50%);">m</div>
<div class="t" id="t73" style="top:689.65px;font-size:14px;color:#5dbb7a;left:1633.5px;transform:translateX(-50%);">c</div>
<div class="t" id="t74" style="top:689.65px;font-size:14px;color:#5dbb7a;left:1659px;transform:translateX(-50%);">v</div>
<div class="t" id="t75" style="top:690.72px;font-size:12.5px;color:#5b93da;letter-spacing:-0.581px;left:1816.5px;">CHANGE</div>
<div class="t" id="t76" style="top:739.48px;font-size:15.5px;color:#4a4a4a;letter-spacing:0.361px;left:1454px;">Services:</div>
<div class="t" id="t77" style="top:781.03px;font-size:16.5px;color:#3a3a3a;-webkit-text-stroke:0.6px currentColor;letter-spacing:0.326px;left:1489px;">5−Axis Machining</div>
<div class="t" id="t78" style="top:804.06px;font-size:16px;color:#4a4a4a;letter-spacing:-0.084px;left:1489px;">Mazak CV5-500,</div>
<div class="t" id="t79" style="top:825.76px;font-size:16px;color:#4a4a4a;letter-spacing:0.312px;left:1489px;">± 0.240 mm</div>
<div class="t" id="t80" style="top:785.15px;font-size:14px;color:#4a4a4a;left:1691.2px;transform:translateX(-50%);">0</div>
<div class="t" id="t81" style="top:785.30px;font-size:15px;color:#4a4a4a;letter-spacing:0.411px;left:1738.5px;">20 min</div>
<div class="t" id="t82" style="top:874.43px;font-size:16.5px;color:#3a3a3a;-webkit-text-stroke:0.6px currentColor;letter-spacing:0.337px;left:1488.8px;">Polishing</div>
<div class="t" id="t83" style="top:878.30px;font-size:15px;color:#4a4a4a;letter-spacing:0.411px;left:1738.5px;">10 min</div>
<div class="t" id="t84" style="top:952.86px;font-size:16px;color:#a6a6aa;letter-spacing:-0.041px;left:1494px;">Choose Service ...</div>
<div class="t" id="t85" style="top:1014.68px;font-size:15.5px;color:#4a4a4a;letter-spacing:0.719px;left:1454px;">Quantity:</div>
<div class="t" id="t86" style="top:1048.30px;font-size:15px;color:#4a4a4a;letter-spacing:1.156px;left:1471.6px;">4</div>
<div class="t" id="t87" style="top:1120.53px;font-size:16.5px;color:#3a3a3a;-webkit-text-stroke:0.6px currentColor;letter-spacing:0.603px;left:1454px;">Configuration</div>
<div class="t" id="t88" style="top:1146.46px;font-size:16px;color:#4a4a4a;letter-spacing:-0.058px;left:1454px;">CNC, 304 Stainless Steel, ISO 2768 m /</div>
<div class="t" id="t89" style="top:1169.06px;font-size:16px;color:#4a4a4a;letter-spacing:0.224px;left:1454px;">5-Axis Machining, Polishing / qty. 4</div>
<div class="t" id="t90" style="top:1149.92px;font-size:12.5px;color:#5b93da;letter-spacing:-0.729px;left:1806px;">SAVE CONFIG</div>
<div class="t" id="t91" style="top:1207.83px;font-size:16.5px;color:#3a3a3a;-webkit-text-stroke:0.6px currentColor;letter-spacing:0.739px;left:1454px;">Total time</div>
<div class="t" id="t92" style="top:1233.46px;font-size:16px;color:#4a4a4a;letter-spacing:0.328px;left:1454px;">47 min</div>
<div class="t" id="t93" style="top:1297.03px;font-size:16.5px;color:#4a4a4a;letter-spacing:0.611px;-webkit-text-stroke:0.5px currentColor;left:1470.3px;">Total part price</div>
<div class="t" id="t94" style="top:1297.46px;font-size:16px;color:#4a4a4a;letter-spacing:0.165px;-webkit-text-stroke:0.45px currentColor;left:1707.6px;">$400.00</div>
<div class="t" id="t95" style="top:1340.46px;font-size:16px;color:#4a4a4a;letter-spacing:0.165px;-webkit-text-stroke:0.45px currentColor;left:1707.6px;">$100.00</div>
<div class="t" id="t96" style="top:1418.63px;font-size:16.5px;color:#ffffff;letter-spacing:-0.607px;-webkit-text-stroke:0.5px currentColor;left:1627px;">ADD TO LIST</div>
</body></html>
